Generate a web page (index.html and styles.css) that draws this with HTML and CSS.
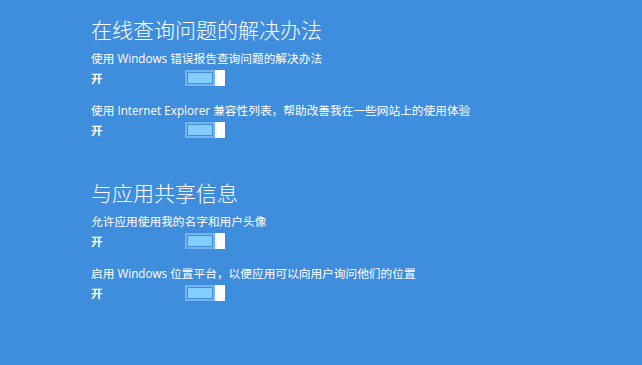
FILE: index.html
```html
<!DOCTYPE html>
<html lang="zh-CN">
<head>
<meta charset="utf-8">
<link rel="stylesheet" href="styles.css">
</head>
<body>
<main class="page">
  <section class="group">
    <h1 class="title">在线查询问题的解决办法</h1>
    <div class="item">
      <p class="label">使用 Windows 错误报告查询问题的解决办法</p>
      <div class="row"><span class="state">开</span><span class="toggle"><span class="track"><span class="fill"></span></span><span class="thumb"></span></span></div>
    </div>
    <div class="item">
      <p class="label">使用 Internet Explorer 兼容性列表，帮助改善我在一些网站上的使用体验</p>
      <div class="row"><span class="state">开</span><span class="toggle"><span class="track"><span class="fill"></span></span><span class="thumb"></span></span></div>
    </div>
  </section>
  <section class="group group-second">
    <h1 class="title">与应用共享信息</h1>
    <div class="item">
      <p class="label">允许应用使用我的名字和用户头像</p>
      <div class="row"><span class="state">开</span><span class="toggle"><span class="track"><span class="fill"></span></span><span class="thumb"></span></span></div>
    </div>
    <div class="item">
      <p class="label">启用 Windows 位置平台，以便应用可以向用户询问他们的位置</p>
      <div class="row"><span class="state">开</span><span class="toggle"><span class="track"><span class="fill"></span></span><span class="thumb"></span></span></div>
    </div>
  </section>
</main>
</body>
</html>
```
FILE: styles.css
```css
html, body {
  margin: 0;
  padding: 0;
  background: #3f8ddd;
  width: 642px;
  height: 365px;
  overflow: hidden;
}
body {
  font-family: "Segoe UI", "Open Sans", "Noto Sans CJK SC", sans-serif;
  color: #ffffff;
}
.page {
  padding: 14px 0 0 91px;
}
.group-second {
  margin-top: 39px;
}
.title {
  margin: 0 0 6px 0;
  font-family: "Noto Sans CJK SC", sans-serif;
  font-weight: 300;
  font-size: 21px;
  line-height: 30px;
  height: 30px;
}
.item {
  margin-bottom: 16px;
}
.label {
  margin: 0 0 4px 0;
  font-family: "Open Sans", "Noto Sans CJK SC", sans-serif;
  font-size: 11.7px;
  line-height: 16px;
  height: 16px;
  white-space: nowrap;
}
.row {
  display: flex;
  align-items: center;
  height: 16px;
}
.state {
  width: 94px;
  font-family: "Noto Sans CJK SC", sans-serif;
  font-weight: 700;
  font-size: 11.5px;
  line-height: 16px;
}
.toggle {
  display: flex;
  width: 40px;
  height: 16px;
}
.track {
  box-sizing: border-box;
  width: 30px;
  height: 16px;
  border: 2px solid #74b3ec;
  padding: 1px;
  display: flex;
}
.fill {
  flex: 1;
  background: #84cdff;
}
.thumb {
  width: 10px;
  height: 16px;
  background: #ffffff;
}
```
